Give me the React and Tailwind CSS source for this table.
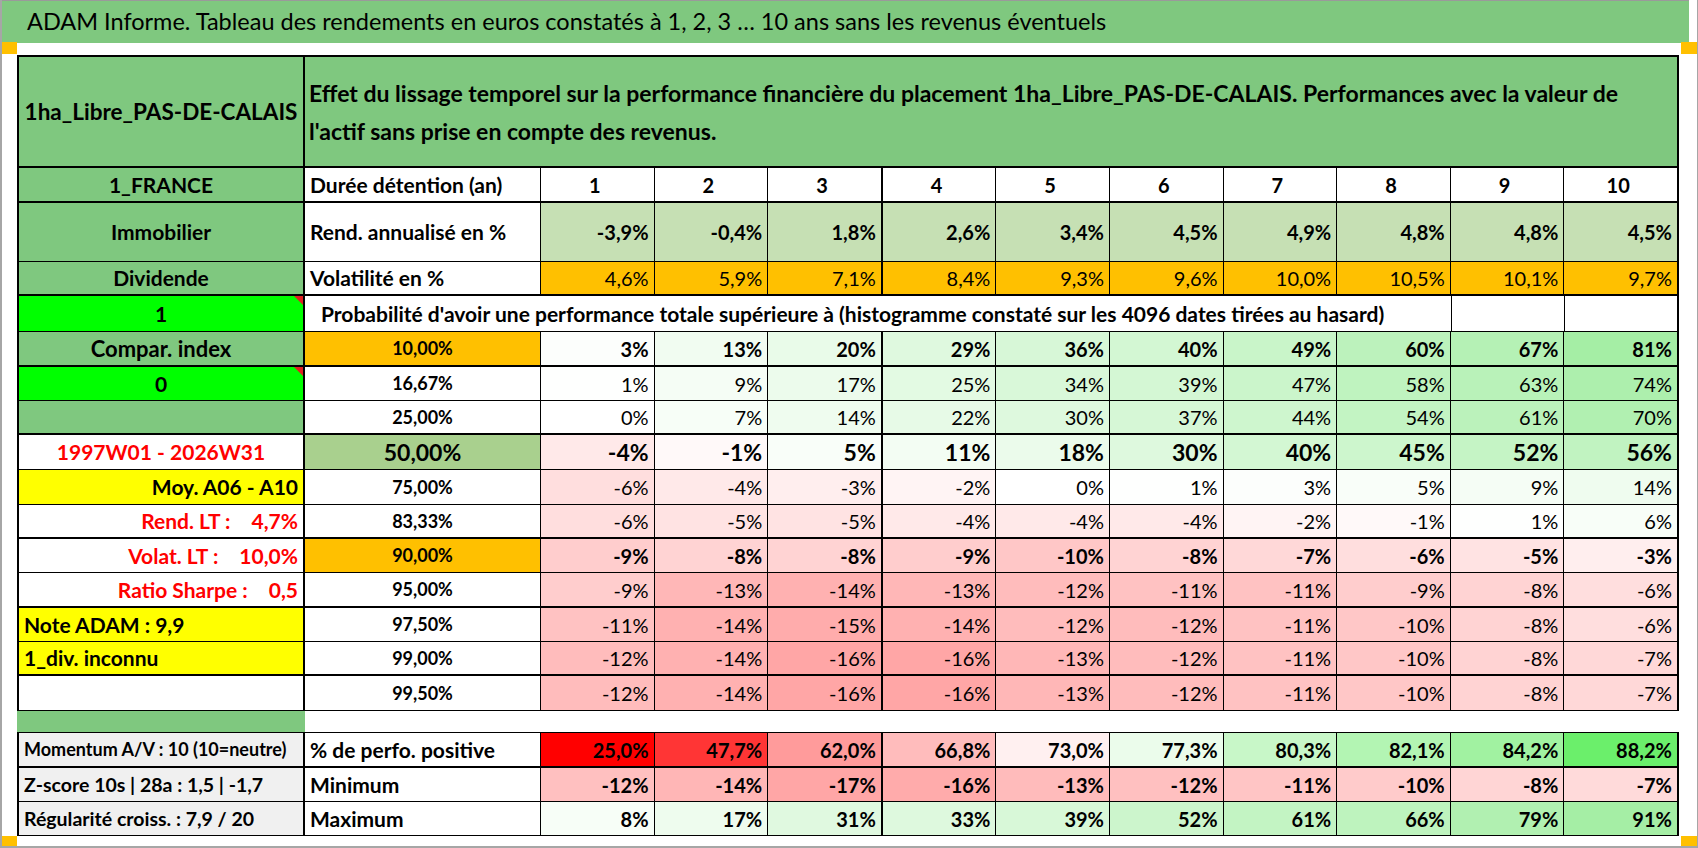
const GREEN = 'bg-[#7fc87f]'

// 3-colour scale used by Excel on the probability block
function scale(v, max = 81, min = -16) {
  if (v >= 0) {
    const t = Math.min(v / max, 1)
    const rb = Math.round(255 - t * 90)
    const g = Math.round(255 - t * 17)
    return `rgb(${rb},${g},${rb})`
  }
  const t = Math.min(v / min, 1)
  const gb = Math.round(255 - t * 89)
  return `rgb(255,${gb},${gb})`
}

const momentumBg = ['#ff0000', '#ff3535', '#ff9b9b', '#ffbcbc', '#fff0f0', '#ebfceb', '#c8f7c8', '#b3f5b3', '#a1f2a1', '#6bef6b']

const pct = v => `${v}%`

const rows = [
  { h: 'h-[35px]', bb: 'border-b-2', a: { t: '1_FRANCE', c: `${GREEN} justify-center text-[15px]` }, b: { t: 'Durée détention (an)' },
    d: { vals: ['1', '2', '3', '4', '5', '6', '7', '8', '9', '10'], c: 'justify-center font-bold text-[20px] bg-white' } },
  { h: 'h-[59px]', bb: 'border-b', a: { t: 'Immobilier', c: `${GREEN} justify-center` }, b: { t: 'Rend. annualisé en %' },
    d: { vals: ['-3,9%', '-0,4%', '1,8%', '2,6%', '3,4%', '4,5%', '4,9%', '4,8%', '4,8%', '4,5%'], c: 'justify-end font-bold text-[20px] bg-[#c6e0b4]' } },
  { h: 'h-[34px]', bb: 'border-b-2', a: { t: 'Dividende', c: `${GREEN} justify-center` }, b: { t: 'Volatilité en %' },
    d: { vals: ['4,6%', '5,9%', '7,1%', '8,4%', '9,3%', '9,6%', '10,0%', '10,5%', '10,1%', '9,7%'], c: 'justify-end font-normal text-[20px] bg-[#ffc000]' } },
  { prob: true, h: 'h-[36px]', bb: 'border-b', a: { t: '1', c: 'bg-[#00ff00] justify-center', tri: true } },
  { h: 'h-[35px]', bb: 'border-b-2', a: { t: 'Compar. index', c: `${GREEN} justify-center text-[22px]` }, b: { t: '10,00%', c: 'justify-center bg-[#ffc000] text-[18px]' },
    n: { vals: [3, 13, 20, 29, 36, 40, 49, 60, 67, 81], bold: true } },
  { h: 'h-[34px]', bb: 'border-b', a: { t: '0', c: 'bg-[#00ff00] justify-center', tri: true }, b: { t: '16,67%', c: 'justify-center text-[18px]' },
    n: { vals: [1, 9, 17, 25, 34, 39, 47, 58, 63, 74] } },
  { h: 'h-[34px]', bb: 'border-b-2', a: { t: '', c: `${GREEN}` }, b: { t: '25,00%', c: 'justify-center text-[18px]' },
    n: { vals: [0, 7, 14, 22, 30, 37, 44, 54, 61, 70] } },
  { h: 'h-[35px]', bb: 'border-b', a: { t: '1997W01 - 2026W31', c: 'justify-center text-[#ff0000] text-[19px]' }, b: { t: '50,00%', c: 'justify-center bg-[#a9d08e] text-[23px]' },
    n: { vals: [-4, -1, 5, 11, 18, 30, 40, 45, 52, 56], bold: true, big: true } },
  { h: 'h-[35px]', bb: 'border-b', a: { t: 'Moy. A06 - A10', c: 'justify-end bg-[#ffff00] text-[20px]' }, b: { t: '75,00%', c: 'justify-center text-[18px]' },
    n: { vals: [-6, -4, -3, -2, 0, 1, 3, 5, 9, 14] } },
  { h: 'h-[34px]', bb: 'border-b-2', a: { t: 'Rend. LT :', v: '4,7%', c: 'justify-end text-[#ff0000] text-[20px]' }, b: { t: '83,33%', c: 'justify-center text-[18px]' },
    n: { vals: [-6, -5, -5, -4, -4, -4, -2, -1, 1, 6] } },
  { h: 'h-[34px]', bb: 'border-b', a: { t: 'Volat. LT :', v: '10,0%', c: 'justify-end text-[#ff0000] text-[20px]' }, b: { t: '90,00%', c: 'justify-center bg-[#ffc000] text-[18px]' },
    n: { vals: [-9, -8, -8, -9, -10, -8, -7, -6, -5, -3], bold: true } },
  { h: 'h-[35px]', bb: 'border-b-2', a: { t: 'Ratio Sharpe :', v: '0,5', c: 'justify-end text-[#ff0000] text-[20px]' }, b: { t: '95,00%', c: 'justify-center text-[18px]' },
    n: { vals: [-9, -13, -14, -13, -12, -11, -11, -9, -8, -6] } },
  { h: 'h-[34px]', bb: 'border-b', a: { t: 'Note ADAM : 9,9', c: 'justify-start bg-[#ffff00] text-[21px]' }, b: { t: '97,50%', c: 'justify-center text-[18px]' },
    n: { vals: [-11, -14, -15, -14, -12, -12, -11, -10, -8, -6] } },
  { h: 'h-[34px]', bb: 'border-b-2', a: { t: '1_div. inconnu', c: 'justify-start bg-[#ffff00] text-[21px]' }, b: { t: '99,00%', c: 'justify-center text-[18px]' },
    n: { vals: [-12, -14, -16, -16, -13, -12, -11, -10, -8, -7] } },
  { h: 'h-[35px]', bb: 'border-b', a: { t: '', c: '' }, b: { t: '99,50%', c: 'justify-center text-[18px]' },
    n: { vals: [-12, -14, -16, -16, -13, -12, -11, -10, -8, -7] } },
]

const bottomRows = [
  { h: 'h-[35px]', bb: 'border-b-2', a: 'Momentum A/V : 10 (10=neutre)', as: 'text-[18px]', b: '% de perfo. positive',
    vals: ['25,0%', '47,7%', '62,0%', '66,8%', '73,0%', '77,3%', '80,3%', '82,1%', '84,2%', '88,2%'], bg: i => momentumBg[i] },
  { h: 'h-[34px]', bb: 'border-b', a: 'Z-score 10s | 28a : 1,5 | -1,7', as: 'text-[19.5px]', b: 'Minimum',
    vals: [-12, -14, -17, -16, -13, -12, -11, -10, -8, -7].map(pct), bg: (i, r) => scale(parseInt(r.vals[i]), 91, -17) },
  { h: 'h-[34px]', bb: 'border-b', a: 'Régularité croiss. : 7,9 / 20', as: 'text-[19.5px]', b: 'Maximum',
    vals: [8, 17, 31, 33, 39, 52, 61, 66, 79, 91].map(pct), bg: (i, r) => scale(parseInt(r.vals[i]), 91, -17) },
]

const dataBorder = i => (i === 2 || i === 9 ? 'border-r-2' : 'border-r')

function Triangle() {
  return <span className="absolute right-0 top-0 w-0 h-0 border-l-[9px] border-l-transparent border-t-[9px] border-t-[#e02020]" />
}

function LeftCell({ a }) {
  return (
    <div className={`relative w-[286px] shrink-0 border-r-2 border-black flex items-center px-[5px] font-bold text-[21px] ${a.c}`}>
      {a.v ? (
        <>
          <span>{a.t}</span>
          <span className="ml-[21px]">{a.v}</span>
        </>
      ) : (
        <span className="whitespace-nowrap">{a.t}</span>
      )}
      {a.tri && <Triangle />}
    </div>
  )
}

function Row({ r }) {
  if (r.prob) {
    return (
      <div className={`flex ${r.h} ${r.bb} border-black`}>
        <LeftCell a={r.a} />
        <div className="w-[1147px] shrink-0 border-r border-black flex items-center pl-[16px] font-bold text-[21px] whitespace-nowrap">
          Probabilité d'avoir une performance totale supérieure à (histogramme constaté sur les 4096 dates tirées au hasard)
        </div>
        <div className="flex-1 border-r border-black" />
        <div className="flex-1 border-r-2 border-black" />
      </div>
    )
  }
  return (
    <div className={`flex ${r.h} ${r.bb} border-black`}>
      <LeftCell a={r.a} />
      <div className={`w-[236px] shrink-0 border-r border-black flex items-center font-bold ${r.b.c || 'justify-start pl-[5px] text-[21px]'}`}>
        {r.b.t}
      </div>
      <div className="flex flex-1">
        {r.d &&
          r.d.vals.map((v, i) => (
            <div key={i} className={`flex-1 flex items-center pr-[5px] ${dataBorder(i)} border-black ${r.d.c}`}>{v}</div>
          ))}
        {r.n &&
          r.n.vals.map((v, i) => (
            <div
              key={i}
              className={`flex-1 flex items-center justify-end pr-[5px] ${dataBorder(i)} border-black ${r.n.bold ? 'font-bold' : 'font-normal'} ${r.n.big ? 'text-[23px]' : 'text-[20px]'}`}
              style={{ backgroundColor: scale(v) }}
            >
              {pct(v)}
            </div>
          ))}
      </div>
    </div>
  )
}

export default function App() {
  return (
    <div className="relative w-[1698px] h-[848px] overflow-hidden bg-white border-l-2 border-r border-b-2 border-[#a6a6a6] text-black [font-family:Lato,sans-serif]">
      {/* title bar */}
      <div className={`h-[43px] mr-[8px] ${GREEN} border-t border-[#9a9a9a] flex items-center pl-[25px] text-[23.5px] whitespace-nowrap`}>
        ADAM Informe. Tableau des rendements en euros constatés à 1, 2, 3 … 10 ans sans les revenus éventuels
      </div>
      <div className="h-[12px]" />

      <div className="ml-[15px] w-[1662px] border-l-2 border-t-2 border-black">
        {/* header */}
        <div className={`flex h-[111px] border-b-2 border-black ${GREEN}`}>
          <div className="w-[286px] shrink-0 border-r-2 border-black flex items-center justify-center font-bold text-[22.5px] whitespace-nowrap">
            1ha_Libre_PAS-DE-CALAIS
          </div>
          <div className="flex-1 border-r-2 border-black flex flex-col justify-center pl-[4px] font-bold text-[23px] leading-[38px] whitespace-nowrap">
            <span>Effet du lissage temporel sur la performance financière du placement 1ha_Libre_PAS-DE-CALAIS. Performances avec la valeur de</span>
            <span>l'actif sans prise en compte des revenus.</span>
          </div>
        </div>

        {rows.map((r, i) => (
          <Row key={i} r={r} />
        ))}

        {/* spacer */}
        <div className="flex h-[22px] border-b border-black -ml-[2px]">
          <div className={`w-[288px] shrink-0 ${GREEN}`} />
          <div className="flex-1 bg-white" />
        </div>

        {bottomRows.map((r, k) => (
          <div key={k} className={`flex ${r.h} ${r.bb} border-black`}>
            <div className={`w-[286px] shrink-0 border-r-2 border-black bg-[#f0f0f0] flex items-center px-[5px] font-bold whitespace-nowrap overflow-hidden ${r.as}`}>
              {r.a}
            </div>
            <div className="w-[236px] shrink-0 border-r border-black flex items-center pl-[5px] font-bold text-[21px]">{r.b}</div>
            <div className="flex flex-1">
              {r.vals.map((v, i) => (
                <div
                  key={i}
                  className={`flex-1 flex items-center justify-end pr-[5px] ${dataBorder(i)} border-black font-bold text-[20px]`}
                  style={{ backgroundColor: r.bg(i, r) }}
                >
                  {v}
                </div>
              ))}
            </div>
          </div>
        ))}
      </div>

      {/* selection handles */}
      <div className="absolute left-0 top-[42px] w-[15px] h-[12px] bg-[#ffc000]" />
      <div className="absolute right-0 top-[42px] w-[16px] h-[12px] bg-[#ffc000]" />
      <div className="absolute left-0 bottom-0 w-[15px] h-[10px] bg-[#ffc000]" />
      <div className="absolute right-0 bottom-0 w-[16px] h-[10px] bg-[#ffc000]" />
    </div>
  )
}
